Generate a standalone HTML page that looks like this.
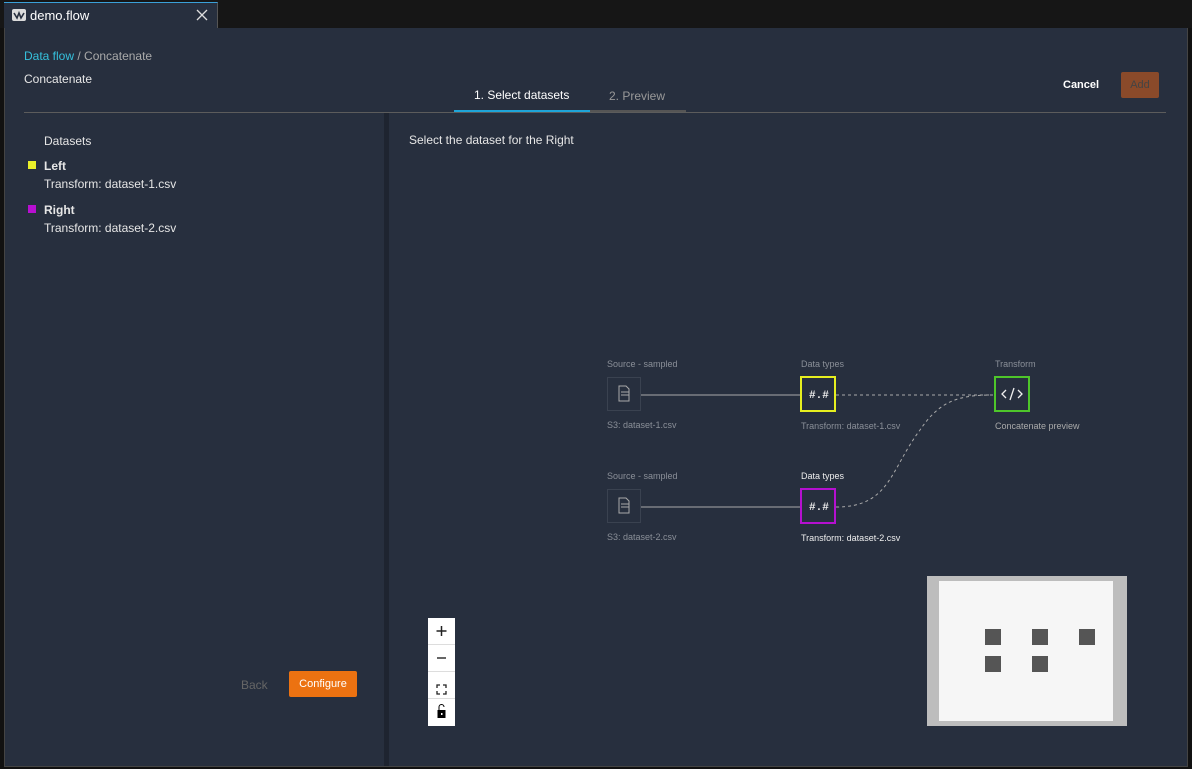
<!DOCTYPE html>
<html><head><style>
*{margin:0;padding:0;box-sizing:border-box}
body{width:1192px;height:769px;background:#111;font-family:"Liberation Sans",sans-serif;position:relative;overflow:hidden;color:#e6e6e6}
.a{position:absolute}
.t12{font-size:12px}
</style></head><body>
<div class="a" style="left:0;top:0;width:1192px;height:28px;background:#161616"></div>
<div class="a" style="left:4px;top:2px;width:214px;height:27px;background:#272f3e;border-top:1px solid #3aa0d8;border-right:1px solid #555"></div>
<div class="a" style="left:12px;top:9px;width:14px;height:12px;background:#dcdcdc;border-radius:2px"></div>
<svg class="a" style="left:12px;top:9px" width="14" height="12"><path d="M2 4 L5 9 L7 4 L9 9 L12 4" stroke="#272f3e" stroke-width="1.6" fill="none"/></svg>
<div class="a t12" style="left:30px;top:8px;color:#fff;font-size:13px">demo.flow</div>
<svg class="a" style="left:196px;top:9px" width="12" height="12"><path d="M1 1L11 11M11 1L1 11" stroke="#ddd" stroke-width="1.3"/></svg>
<div class="a" style="left:4px;top:28px;width:1184px;height:739px;background:#272f3e;border:1px solid #444;border-top:none"></div>
<div class="a t12" style="left:24px;top:49px"><span style="color:#35c0dc">Data flow</span> <span style="color:#aaa">/ Concatenate</span></div>
<div class="a t12" style="left:24px;top:72px">Concatenate</div>
<div class="a t12" style="left:474px;top:88px;color:#fff">1. Select datasets</div>
<div class="a t12" style="left:609px;top:89px;color:#999">2. Preview</div>
<div class="a" style="left:24px;top:112px;width:1142px;height:1px;background:#5c5c5c"></div>
<div class="a" style="left:454px;top:110px;width:232px;height:2px;background:#555"></div>
<div class="a" style="left:454px;top:110px;width:136px;height:2px;background:#1ea5d9"></div>
<div class="a t12" style="left:1063px;top:79px;color:#fff;font-weight:bold;font-size:11px">Cancel</div>
<div class="a" style="left:1121px;top:72px;width:38px;height:26px;background:#8a4a2a;border-radius:2px;color:#444;font-size:11px;text-align:center;line-height:26px">Add</div>
<div class="a" style="left:384px;top:113px;width:5px;height:653px;background:#1e2430"></div>
<div class="a t12" style="left:44px;top:134px">Datasets</div>
<div class="a" style="left:28px;top:161px;width:8px;height:8px;background:#eaf02a"></div>
<div class="a t12" style="left:44px;top:159px;font-weight:bold">Left</div>
<div class="a t12" style="left:44px;top:177px">Transform: dataset-1.csv</div>
<div class="a" style="left:28px;top:205px;width:8px;height:8px;background:#b80fd1"></div>
<div class="a t12" style="left:44px;top:203px;font-weight:bold">Right</div>
<div class="a t12" style="left:44px;top:221px">Transform: dataset-2.csv</div>
<div class="a t12" style="left:241px;top:678px;color:#666">Back</div>
<div class="a" style="left:289px;top:671px;width:68px;height:26px;background:#ec7211;border-radius:2px;color:#fff;font-size:11px;text-align:center;line-height:26px">Configure</div>
<div class="a t12" style="left:409px;top:133px">Select the dataset for the Right</div>
<svg class="a" style="left:590px;top:350px" width="520" height="200" font-family="Liberation Sans" font-size="9">
<text x="17" y="17" fill="#8a8f98">Source - sampled</text>
<text x="211" y="17" fill="#8a8f98">Data types</text>
<text x="405" y="17" fill="#8a8f98">Transform</text>
<text x="17" y="78" fill="#8a8f98">S3: dataset-1.csv</text>
<text x="211" y="79" fill="#8a8f98">Transform: dataset-1.csv</text>
<text x="405" y="79" fill="#aaa">Concatenate preview</text>
<text x="17" y="129" fill="#8a8f98">Source - sampled</text>
<text x="211" y="129" fill="#eee">Data types</text>
<text x="17" y="190" fill="#8a8f98">S3: dataset-2.csv</text>
<text x="211" y="191" fill="#eee">Transform: dataset-2.csv</text>
<rect x="17.5" y="27.5" width="33" height="33" fill="#272f3e" stroke="#3a4250"/>
<rect x="17.5" y="139.5" width="33" height="33" fill="#272f3e" stroke="#3a4250"/>
<path d="M29 36h7l3 3v12h-10z M31 42h8 M31 45h8" stroke="#aaa" fill="none"/>
<path d="M29 148h7l3 3v12h-10z M31 154h8 M31 157h8" stroke="#aaa" fill="none"/>
<line x1="51" y1="45" x2="210" y2="45" stroke="#aaa"/>
<line x1="51" y1="157" x2="210" y2="157" stroke="#aaa"/>
<rect x="211" y="27" width="34" height="34" fill="none" stroke="#e6ef1f" stroke-width="2"/>
<rect x="211" y="139" width="34" height="34" fill="none" stroke="#b510d0" stroke-width="2"/>
<rect x="405" y="27" width="34" height="34" fill="none" stroke="#4ec62a" stroke-width="2"/>
<text x="219" y="48" fill="#eee" font-family="Liberation Mono" font-size="11" font-weight="bold">#.#</text>
<text x="219" y="160" fill="#eee" font-family="Liberation Mono" font-size="11" font-weight="bold">#.#</text>
<path d="M416 40l-4 4 4 4M428 40l4 4-4 4M424 38l-4 12" stroke="#eee" stroke-width="1.3" fill="none"/>
<path d="M246 45H403" stroke="#aaa" stroke-dasharray="3 3"/>
<path d="M246 157C300 157 300 120 330 80C350 50 370 45 403 45" stroke="#aaa" stroke-dasharray="3 3" fill="none"/>
</svg>
<div class="a" style="left:428px;top:618px;width:27px;height:108px;background:#fff"></div>
<div class="a" style="left:428px;top:644px;width:27px;height:1px;background:#ddd"></div>
<div class="a" style="left:428px;top:671px;width:27px;height:1px;background:#ddd"></div>
<div class="a" style="left:428px;top:698px;width:27px;height:1px;background:#ddd"></div>
<svg class="a" style="left:428px;top:618px" width="27" height="108">
<path d="M13.5 8v10M8.5 13h10" stroke="#222" stroke-width="1.5"/>
<path d="M9 40h9" stroke="#333" stroke-width="1.5"/>
<path d="M9 70v-3h3M15 67h3v3M18 73v3h-3M12 76h-3v-3" stroke="#222" stroke-width="1.3" fill="none"/>
<rect x="9.5" y="92" width="8" height="8" fill="#000"/>
<path d="M11 92v-3a2.5 2.5 0 0 1 5 0" stroke="#000" fill="none"/>
<rect x="13" y="95" width="1.5" height="2" fill="#fff"/>
</svg>
<div class="a" style="left:927px;top:576px;width:200px;height:150px;background:#bdbdbd"></div>
<div class="a" style="left:939px;top:581px;width:174px;height:140px;background:#f6f6f6"></div>
<div class="a" style="left:985px;top:629px;width:16px;height:16px;background:#555"></div>
<div class="a" style="left:1032px;top:629px;width:16px;height:16px;background:#555"></div>
<div class="a" style="left:1079px;top:629px;width:16px;height:16px;background:#555"></div>
<div class="a" style="left:985px;top:656px;width:16px;height:16px;background:#555"></div>
<div class="a" style="left:1032px;top:656px;width:16px;height:16px;background:#555"></div>
</body></html>
